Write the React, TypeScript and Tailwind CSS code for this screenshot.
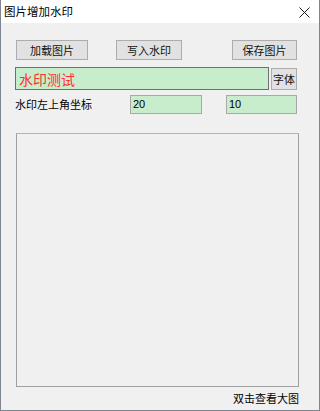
const cjk = { fontFamily: '"Noto Sans CJK SC", "Noto Sans", sans-serif' };

function Btn({ label, w }: { label: string; w: string }) {
  return (
    <button
      className={`${w} h-[20px] bg-[#e1e1e1] border border-[#adadad] text-[11px] leading-none text-[#111] flex items-center justify-center`}
    >
      {label}
    </button>
  );
}

export default function App() {
  return (
    <div
      className="w-[320px] h-[411px] flex flex-col border-x border-b border-[#7d8590] bg-[#f0f0f0] overflow-hidden"
      style={cjk}
    >
      {/* Title bar */}
      <div className="h-[23px] bg-white flex items-center justify-between pl-[3px] pr-[9px] shrink-0">
        <span className="text-[11.5px] text-black leading-none">图片增加水印</span>
        <svg width="11" height="11" viewBox="0 0 11 11" className="mt-[2px]">
          <path d="M0.5 0.5 L10.5 10.5 M10.5 0.5 L0.5 10.5" stroke="#1a1a1a" strokeWidth="1" fill="none" />
        </svg>
      </div>

      <div className="flex-1 flex flex-col pl-[14px] pr-[20px]">
        {/* Buttons */}
        <div className="flex mt-[17px] pl-[1px]">
          <Btn label="加载图片" w="w-[72px]" />
          <div className="w-[28px]" />
          <Btn label="写入水印" w="w-[66px]" />
          <div className="w-[50px]" />
          <Btn label="保存图片" w="w-[65px]" />
        </div>

        {/* Watermark text */}
        <div className="flex items-start mt-[7px]">
          <div className="w-[254px] h-[23px] bg-[#c7edcc] border border-[#6f6f6f] flex items-center pl-[3px]">
            <span className="text-[14px] text-[#ff3030] leading-none">水印测试</span>
          </div>
          <button className="ml-[2px] mt-[1px] w-[26px] h-[22px] bg-[#e1e1e1] border border-[#adadad] text-[11px] leading-none text-[#111] flex items-center justify-center">
            字体
          </button>
        </div>

        {/* Coordinates */}
        <div className="flex items-center mt-[5px] h-[19px]">
          <span className="w-[115px] shrink-0 text-[11px] leading-none text-black">水印左上角坐标</span>
          <div className="w-[72px] h-[19px] bg-[#c7edcc] border border-[#a8a8a8] flex items-center pl-[2px]">
            <span className="text-[11px] leading-none text-black" style={{ fontFamily: '"Liberation Sans", sans-serif' }}>20</span>
          </div>
          <div className="w-[24px]" />
          <div className="w-[71px] h-[19px] bg-[#c7edcc] border border-[#a8a8a8] flex items-center pl-[2px]">
            <span className="text-[11px] leading-none text-black" style={{ fontFamily: '"Liberation Sans", sans-serif' }}>10</span>
          </div>
        </div>

        {/* Picture box */}
        <div className="ml-[1px] mt-[19px] w-[283px] h-[254px] border border-[#a0a0a0] border-t-[#b4b4b4] bg-[#f0f0f0]" />

        {/* Caption */}
        <div className="flex justify-end w-[284px] mt-[6px]">
          <span className="text-[11px] leading-none text-black">双击查看大图</span>
        </div>
      </div>
    </div>
  );
}
